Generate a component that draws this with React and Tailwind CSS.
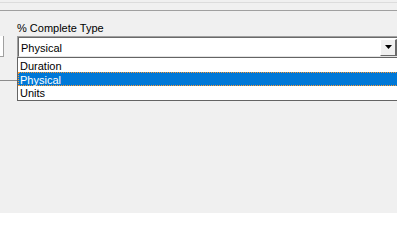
import React from "react";

export default function App() {
  return (
    <div
      className="relative w-[397px] h-[213px] overflow-hidden bg-[#f0f0f0] text-[11px] text-black"
      style={{ fontFamily: '"Liberation Sans", Arial, sans-serif' }}
    >
      <div className="h-[2px]" />
      <div className="h-px bg-[#dcdcdc]" />
      <div className="h-[7px]" />
      <div className="h-px bg-[#a0a0a0]" />
      <div className="flex items-start">
        <div className="mt-[25px] h-[21px] w-[4px] border-r border-b border-[#a0a0a0] bg-white" />
        <div className="ml-[13px] flex flex-col">
          <div className="mt-[10px] h-[15px] leading-[15px]">% Complete Type</div>
          <div className="relative z-10 h-[21px] w-[380px] border-t border-l border-[#a0a0a0] bg-white">
            <div className="flex h-full items-center border-t border-l border-[#696969] border-b border-b-[#e3e3e3]">
              <span className="ml-[2px] pt-px leading-[14px]">Physical</span>
              <div className="ml-auto mr-0 flex h-[17px] w-[17px] items-center justify-center border-t border-l border-white border-r-2 border-b border-r-[#696969] border-b-[#696969] bg-[#f0f0f0]">
                <svg width="7" height="4" viewBox="0 0 7 4">
                  <path d="M0 0H7L3.5 4Z" fill="#000" />
                </svg>
              </div>
            </div>
            <div className="absolute left-[-1px] top-[20px] w-[382px] border border-[#646464] bg-white">
              <div className="h-[14px] pl-[2px] leading-[16px]">Duration</div>
              <div className="h-[14px] border border-dotted border-[#ff9a30] bg-[#0078d7] pl-[1px] leading-[14px] text-white">
                Physical
              </div>
              <div className="h-[14px] pl-[2px] leading-[15px]">Units</div>
            </div>
          </div>
        </div>
      </div>
      <div className="mt-[23px] h-px w-full bg-[#8c8c8c]" />
    </div>
  );
}
